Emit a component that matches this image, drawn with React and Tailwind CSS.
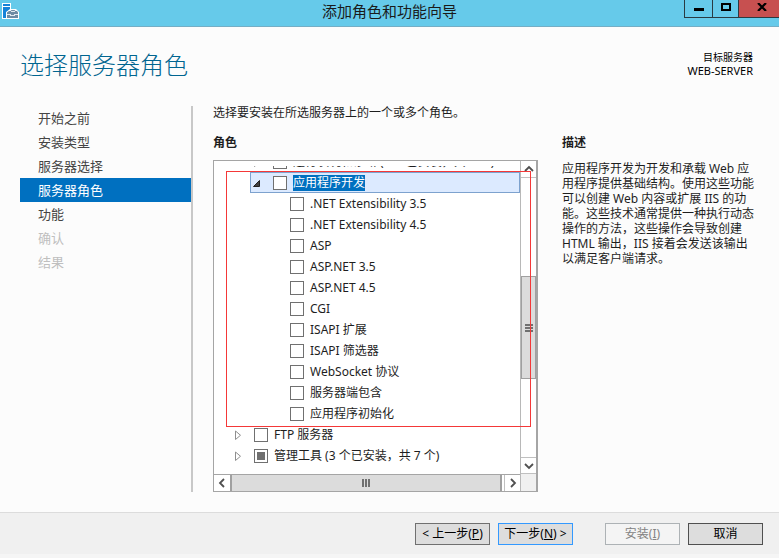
import React from 'react';

const steps = [
    { label: '开始之前', state: 'done' },
    { label: '安装类型', state: 'done' },
    { label: '服务器选择', state: 'done' },
    { label: '服务器角色', state: 'current' },
    { label: '功能', state: 'done' },
    { label: '确认', state: 'disabled' },
    { label: '结果', state: 'disabled' },
];

const features = [
    '.NET Extensibility 3.5',
    '.NET Extensibility 4.5',
    'ASP',
    'ASP.NET 3.5',
    'ASP.NET 4.5',
    'CGI',
    'ISAPI 扩展',
    'ISAPI 筛选器',
    'WebSocket 协议',
    '服务器端包含',
    '应用程序初始化',
];

const stepStyles = {
    done: 'text-[#444444]',
    current: 'bg-[#0070c0] text-white',
    disabled: 'text-[#bfbfbf]',
};

function AppIcon() {
    return (
        <svg viewBox="0 0 17 17" className="size-[17px]">
            <path d="M0 0h9v6h5l3 3v7H0z" fill="#ffffff" />
            <path d="M1 1h7v2H1zM1 4h7v2L4 9v6H1z" fill="#1683d8" />
            <path d="M5 9.5L7 8h1.500l1-1h3l1 1H15l1 1.500V15H5z" fill="#6d8ba3" />
            <path d="M9 8h4v1H9zM5 11h4v1h3v-1h4v1h-3v1H8v-1H5z" fill="#dfe8ee" />
        </svg>
    );
}

function Chevron({ d }) {
    return (
        <svg viewBox="0 0 10 10" className="size-2.5" fill="none" stroke="#505050" strokeWidth="1.8">
            <path d={d} />
        </svg>
    );
}

function Expander({ open }) {
    return (
        <button type="button" aria-label={open ? '折叠' : '展开'} className="flex w-3 shrink-0 justify-center">
            <svg viewBox="0 0 8 10" className="h-2.5 w-2">
                {open ? (
                    <path d="M6.500 2.500v6h-6z" fill="#404040" stroke="#202020" />
                ) : (
                    <path d="M1.500 1v8.500l5-4.250z" fill="#ffffff" stroke="#8f8f8f" />
                )}
            </svg>
        </button>
    );
}

function CheckRow({ label, partial, selected }) {
    return (
        <label className="flex items-center gap-1.5 whitespace-nowrap">
            <span className="grid size-3.5 shrink-0 place-items-center">
                <input
                    type="checkbox"
                    className="col-start-1 row-start-1 size-3.5 appearance-none border border-[#707070] bg-white"
                />
                {partial && <span className="col-start-1 row-start-1 size-2 bg-[#707070]" />}
            </span>
            <span className={selected ? 'bg-[#0070c0] leading-4 text-white' : 'leading-4'}>{label}</span>
        </label>
    );
}

function CaptionButtons() {
    return (
        <div className="flex h-[18px] border-b border-l border-[#2a3b42]">
            <button type="button" aria-label="最小化" className="flex w-7 items-center justify-center border-r border-[#2a3b42]">
                <svg viewBox="0 0 10 8" className="h-2 w-2.5"><path d="M0 3h10v3H0z" /></svg>
            </button>
            <button type="button" aria-label="最大化" className="flex w-[26px] items-center justify-center border-r border-[#2a3b42] pb-1">
                <svg viewBox="0 0 10 8" className="h-2 w-2.5"><path d="M1 1h8v6H1z" fill="none" stroke="#000" strokeWidth="2" /></svg>
            </button>
            <button type="button" aria-label="关闭" className="flex w-10 items-center justify-center bg-[#c75050] pb-1 pl-1.5">
                <svg viewBox="0 0 10 8" className="h-2 w-2.5"><path d="M1 0l8 8M9 0L1 8" stroke="#000" strokeWidth="2.2" /></svg>
            </button>
        </div>
    );
}

function RoleTree() {
    return (
        <div className="relative flex border border-r-2 border-[#a5a5a5] bg-white">
            <div className="flex min-w-0 flex-1 flex-col">
                <div className="flex-1 pt-[5px]">
                    {/* scrolled mostly out of view */}
                    <div className="flex h-1.5 items-end overflow-hidden pl-[37px]">
                        <div className="flex h-[21px] shrink-0 items-center gap-2.5">
                            <Expander />
                            <CheckRow label="运行状况和诊断 (1 个已安装，共 6 个)" />
                        </div>
                    </div>
                    <div className="ml-9 flex h-[21px] items-center gap-2.5 border border-[#7da2ce] bg-[#dceaff]">
                        <Expander open />
                        <CheckRow label="应用程序开发" selected />
                    </div>
                    {features.map((name) => (
                        <div key={name} className="flex h-[21px] items-center pl-[76px]">
                            <CheckRow label={name} />
                        </div>
                    ))}
                    <div className="flex h-[21px] items-center gap-2.5 pl-[18px]">
                        <Expander />
                        <CheckRow label="FTP 服务器" />
                    </div>
                    <div className="flex h-[21px] items-center gap-2.5 pl-[18px]">
                        <Expander />
                        <CheckRow label="管理工具 (3 个已安装，共 7 个)" partial />
                    </div>
                </div>
                <div className="mt-2 flex h-[17px] border-t border-[#a5a5a5]">
                    <button type="button" aria-label="向左滚动" className="flex w-4 items-center justify-center">
                        <Chevron d="M7 1L3 5l4 4" />
                    </button>
                    <div className="flex flex-1 items-center justify-center gap-px border-x-2 border-[#a0a0a0] bg-[#dcdcdc]">
                        <span className="h-2 w-0.5 bg-[#707070]" />
                        <span className="h-2 w-0.5 bg-[#707070]" />
                        <span className="h-2 w-0.5 bg-[#707070]" />
                    </div>
                    <button type="button" aria-label="向右滚动" className="ml-0.5 flex w-4 items-center justify-center border-l border-[#c0c0c0]">
                        <Chevron d="M3 1l4 4-4 4" />
                    </button>
                </div>
            </div>
            <div className="flex w-4 flex-col border-l border-[#b8b8b8]">
                <button type="button" aria-label="向上滚动" className="flex h-[17px] items-center justify-center border-b border-[#c0c0c0]">
                    <Chevron d="M1 7l4-4 4 4" />
                </button>
                <div className="flex flex-1 flex-col justify-end pb-[78px]">
                    <div className="flex h-[103px] flex-col items-center justify-center gap-px border border-[#a0a0a0] bg-[#dcdcdc]">
                        <span className="h-0.5 w-2 bg-[#707070]" />
                        <span className="h-0.5 w-2 bg-[#707070]" />
                        <span className="h-0.5 w-2 bg-[#707070]" />
                    </div>
                </div>
                <button type="button" aria-label="向下滚动" className="flex h-[17px] items-center justify-center border-y border-[#c0c0c0]">
                    <Chevron d="M1 3l4 4 4-4" />
                </button>
                <div className="h-[17px] bg-[#f0f0f0]" />
            </div>
            <div className="pointer-events-none absolute top-2.5 right-[5px] left-3 h-[256px] border border-[#f43838]" />
        </div>
    );
}

export default function App() {
    return (
        <div className="flex min-h-screen flex-col bg-[#fcfcfc] font-['Noto_Sans','Noto_Sans_CJK_SC',sans-serif] text-xs text-[#1e1e1e]">
            <header className="grid h-[27px] grid-cols-[1fr_auto_1fr] border-b border-[#75aec5] bg-[#66caea]">
                <div className="pt-[3px] pl-0.5">
                    <AppIcon />
                </div>
                <h1 className="text-[15px] leading-[22px] text-[#1a1a1a]">添加角色和功能向导</h1>
                <div className="flex items-start justify-end">
                    <CaptionButtons />
                </div>
            </header>

            <div className="flex items-start justify-between pt-[22px] pr-[26px] pl-5">
                <h2 className="text-2xl leading-8 font-light text-[#006590]">选择服务器角色</h2>
                <div className="pt-0.5 text-right text-black">
                    <p className="text-[10px] leading-[13px]">目标服务器</p>
                    <p className="text-[11px] leading-[13px]">WEB-SERVER</p>
                </div>
            </div>

            <main className="flex flex-1 pt-[25px] pb-5 pl-5">
                <nav className="w-[173px] shrink-0 border-r-2 border-[#c8c8c8] text-[13px]">
                    {steps.map((step) => (
                        <a key={step.label} href="#" className={`block h-6 pl-[18px] leading-6 ${stepStyles[step.state]}`}>
                            {step.label}
                        </a>
                    ))}
                </nav>
                <section className="ml-5 min-w-0 flex-1">
                    <p className="leading-[14px]">选择要安装在所选服务器上的一个或多个角色。</p>
                    <h3 className="mt-[15px] mb-[9px] leading-4 font-bold">角色</h3>
                    <RoleTree />
                </section>
                <aside className="w-[241px] shrink-0 pt-[29px] pr-6 pl-6">
                    <h3 className="leading-4 font-bold">描述</h3>
                    <p className="mt-2.5 leading-[15px]">
                        应用程序开发为开发和承载 Web 应用程序提供基础结构。使用这些功能可以创建 Web 内容或扩展 IIS 的功能。这些技术通常提供一种执行动态操作的方法，这些操作会导致创建 HTML 输出，IIS 接着会发送该输出以满足客户端请求。
                    </p>
                </aside>
            </main>

            <footer className="flex h-[46px] justify-end border-t border-b-4 border-t-[#dcdcdc] border-b-[#f5f5f5] bg-[#f0f0f0] pt-2.5 pr-4 text-black">
                <button type="button" className="h-[22px] w-[75px] border border-[#707070] bg-[#dddddd]">
                    &lt; 上一步(<u>P</u>)
                </button>
                <button type="button" className="ml-2 h-[22px] w-[75px] border border-[#3399ff] bg-[#dddddd]">
                    下一步(<u>N</u>) &gt;
                </button>
                <button type="button" disabled className="ml-8 h-[22px] w-[75px] border border-[#adb2b5] bg-[#f4f4f4] text-[#838383]">
                    安装(<u>I</u>)
                </button>
                <button type="button" className="ml-2 h-[22px] w-[75px] border border-[#505050] bg-[#dddddd]">
                    取消
                </button>
            </footer>
        </div>
    );
}
